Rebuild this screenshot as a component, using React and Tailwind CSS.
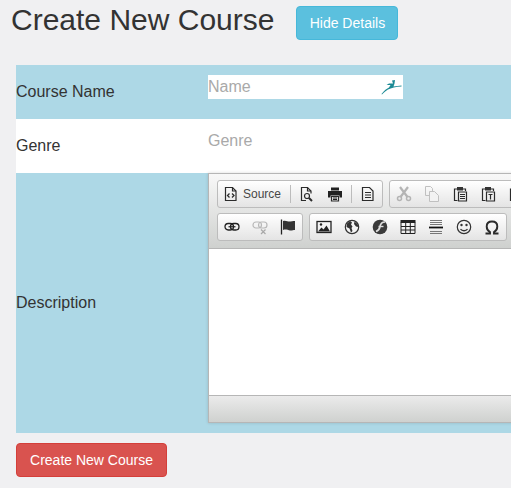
import React from 'react';

const stroke = { fill: 'none', stroke: '#2b2b2b', strokeWidth: 1.2 };

// CKEditor style toolbar icons, 16x16
const icons = {
  source: (
    <>
      <path d="M2.500 1.500h7l3.500 3.500v9.500h-10.500z" {...stroke} />
      <path d="M9.500 1.500v3.500h3.500" {...stroke} />
      <path d="M6.500 7.500l-2 2 2 2M9 7.500l2 2-2 2" {...stroke} strokeWidth="1.300" />
    </>
  ),
  preview: (
    <>
      <path d="M7 14.500h-4.500v-13h6l3.500 3.500v2.500" {...stroke} />
      <path d="M8.500 1.500v3.500h3.500" {...stroke} />
      <circle cx="8" cy="10" r="2.500" {...stroke} />
      <path d="M10 12l3 3" stroke="#2b2b2b" strokeWidth="2" />
    </>
  ),
  print: (
    <>
      <path d="M4 1.500h8v3h-8z" fill="#222" />
      <path d="M1 5h14v6.500h-2.500v-2h-9v2h-2.500z" fill="#222" />
      <path d="M4.500 10.500h7v4.500h-7z" {...stroke} />
      <path d="M6 12h4M6 13.500h4" stroke="#222" />
    </>
  ),
  doc: (
    <>
      <path d="M2.500 1.500h7l3.500 3.500v9.500h-10.500z" {...stroke} />
      <path d="M5 6.500h6M5 9h6M5 11.500h6" stroke="#2b2b2b" />
    </>
  ),
  cut: (
    <>
      <path d="M4 1l7.500 10M12 1l-7.500 10" stroke="#b4b4b4" strokeWidth="2.200" fill="none" />
      <circle cx="3.500" cy="12.500" r="2" fill="none" stroke="#b4b4b4" strokeWidth="1.500" />
      <circle cx="12.500" cy="12.500" r="2" fill="none" stroke="#b4b4b4" strokeWidth="1.500" />
    </>
  ),
  copy: (
    <>
      <path d="M1.500 0.500h5l2 2v7h-7z" fill="none" stroke="#c0c0c0" />
      <path d="M5.500 5.500h5l4 4v6h-9z" fill="#f2f2f2" stroke="#c0c0c0" />
    </>
  ),
  paste: (
    <>
      <path d="M5 3h-2.500v11.500h3" {...stroke} />
      <path d="M11 3h2.500v2" {...stroke} />
      <path d="M5 1h6v3.500h-6z" fill="#333" />
      <path d="M6.500 6h8v9h-8z" {...stroke} />
      <path d="M8 8.500h5M8 10.500h5M8 12.500h5" stroke="#2b2b2b" />
    </>
  ),
  pasteText: (
    <>
      <path d="M5 3h-2.500v11.500h3" {...stroke} />
      <path d="M11 3h2.500v2" {...stroke} />
      <path d="M5 1h6v3.500h-6z" fill="#333" />
      <path d="M6.500 6h8v9h-8z" {...stroke} />
      <path d="M8.500 8.500h4M10.500 8.500v5" stroke="#2b2b2b" strokeWidth="1.200" />
    </>
  ),
  pasteWord: (
    <>
      <path d="M5 3h-2.500v11.500h3" {...stroke} />
      <path d="M5 1h6v3.500h-6z" fill="#333" />
    </>
  ),
  link: (
    <>
      <rect x="1" y="4.500" width="8.500" height="6.500" rx="3.200" fill="none" stroke="#222" strokeWidth="1.300" />
      <rect x="6.500" y="4.500" width="8.500" height="6.500" rx="3.200" fill="none" stroke="#222" strokeWidth="1.300" />
      <path d="M4.500 7.750h7" stroke="#222" strokeWidth="1.200" />
    </>
  ),
  unlink: (
    <>
      <rect x="1" y="3" width="8.500" height="6" rx="3" fill="none" stroke="#b8b8b8" strokeWidth="1.200" />
      <rect x="6.500" y="3" width="8.500" height="6" rx="3" fill="none" stroke="#b8b8b8" strokeWidth="1.200" />
      <path d="M9 10.500l4.500 4.500M13.500 10.500l-4.500 4.500" stroke="#a8a8a8" strokeWidth="1.200" />
    </>
  ),
  anchor: (
    <>
      <path d="M1.500 0.500v15" stroke="#222" strokeWidth="1.300" />
      <path d="M3 2c3-1 5 1 7.500 0.500s3.500-0.500 4.500-0.500v9c-2 0-3 0.800-5 0.500s-4-1.500-7-0.500z" fill="#333" />
    </>
  ),
  image: (
    <>
      <rect x="1" y="2.500" width="14" height="11" fill="none" stroke="#222" strokeWidth="1.300" />
      <path d="M2 12.500l3.500-4 2 2 3-4 3.500 6z" fill="#222" />
      <circle cx="5" cy="5.500" r="1.200" fill="#222" />
    </>
  ),
  globe: (
    <>
      <circle cx="8" cy="8" r="6.700" fill="#f4f4f4" stroke="#333" strokeWidth="1.200" />
      <path d="M3 4.500l3-2.500 2 1.500-1 2 1.500 2-1 1.500 1 3-1.500 1.500-1.500-4-3-1.500zM10.500 2.500l3 2.500 1 3-2.500-0.500-2-2.500z" fill="#333" />
    </>
  ),
  flash: (
    <>
      <circle cx="8" cy="8" r="7.300" fill="#3a3a3a" />
      <path d="M13 3c-3.500 0-4.500 1.500-5 4.500s-1.500 4-4 5" fill="none" stroke="#ddd" strokeWidth="1.700" />
      <path d="M6.500 7.500h5" stroke="#ddd" strokeWidth="1.400" />
    </>
  ),
  table: (
    <>
      <path d="M0.500 1h15v3h-15z" fill="#222" />
      <path d="M1 3.500h14v11h-14zM1 7.500h14M1 11h14M5.700 4v10.500M10.300 4v10.500" fill="none" stroke="#222" />
    </>
  ),
  hr: (
    <>
      <path d="M2 1.500h12M2 3.500h12M2 5.500h12M2 12.500h12M2 14.500h12" stroke="#777" />
      <path d="M1 8.500h14" stroke="#111" strokeWidth="1.800" />
    </>
  ),
  smiley: (
    <>
      <circle cx="8" cy="8" r="6.700" fill="none" stroke="#333" strokeWidth="1.200" />
      <circle cx="5.500" cy="6" r="1.200" fill="#333" />
      <circle cx="10.500" cy="6" r="1.200" fill="#333" />
      <path d="M4.500 10c1.500 2.300 5.500 2.300 7 0" fill="none" stroke="#333" strokeWidth="1.300" />
    </>
  ),
  omega: (
    <path d="M1.500 14.500h4.500v-1.500c-2-1-3.300-3-3.300-5.500 0-3 2-5 5.300-5s5.300 2 5.300 5c0 2.500-1.300 4.500-3.300 5.500v1.500h4.500" fill="none" stroke="#2b2b2b" strokeWidth="1.900" />
  ),
};

function Icon({ name }) {
  return (
    <svg width="16" height="16" viewBox="0 0 16 16" className="shrink-0">
      {icons[name]}
    </svg>
  );
}

function ToolBtn({ name }) {
  return (
    <div className="flex h-[26px] w-[28px] shrink-0 items-center justify-center">
      <Icon name={name} />
    </div>
  );
}

function Group({ children }) {
  return (
    <div className="flex h-[28px] shrink-0 items-center rounded-[3px] border border-[#bcbcbc] bg-gradient-to-b from-[#ffffff] to-[#e4e4e4]">
      {children}
    </div>
  );
}

function Sep() {
  return <div className="mx-[2px] h-[18px] w-px shrink-0 bg-[#bcbcbc]" />;
}

function Editor() {
  return (
    <div className="flex h-[250px] w-[420px] flex-col border border-[#b6b6b6] bg-white shadow-[0_0_3px_rgba(0,0,0,0.15)]">
      {/* Toolbar */}
      <div className="flex h-[75px] shrink-0 flex-col gap-[5px] border-b border-[#b6b6b6] bg-gradient-to-b from-[#f8f8f8] to-[#cfd1cf] pl-[8px] pt-[6px]">
        <div className="flex gap-[6px]">
          <Group>
            <div className="flex h-[26px] w-[70px] shrink-0 items-center pl-[5px]">
              <Icon name="source" />
              <span className="ml-[4px] text-[12px] text-[#474747]">Source</span>
            </div>
            <Sep />
            <ToolBtn name="preview" />
            <ToolBtn name="print" />
            <Sep />
            <ToolBtn name="doc" />
          </Group>
          <Group>
            <ToolBtn name="cut" />
            <ToolBtn name="copy" />
            <ToolBtn name="paste" />
            <ToolBtn name="pasteText" />
            <ToolBtn name="pasteWord" />
          </Group>
        </div>
        <div className="flex gap-[6px]">
          <Group>
            <ToolBtn name="link" />
            <ToolBtn name="unlink" />
            <ToolBtn name="anchor" />
          </Group>
          <Group>
            <ToolBtn name="image" />
            <ToolBtn name="globe" />
            <ToolBtn name="flash" />
            <ToolBtn name="table" />
            <ToolBtn name="hr" />
            <ToolBtn name="smiley" />
            <ToolBtn name="omega" />
          </Group>
        </div>
      </div>
      {/* Content */}
      <div className="flex-1 bg-white" />
      {/* Bottom bar */}
      <div className="h-[27px] shrink-0 border-t border-[#b6b6b6] bg-gradient-to-b from-[#ebebeb] to-[#cfd1cf]" />
    </div>
  );
}

function Row({ label, bg, children, height }) {
  return (
    <div className={`flex ${height} ${bg}`}>
      <div className="flex w-[192px] shrink-0 items-center">
        <label className="text-[16px] text-[#333333]">{label}</label>
      </div>
      <div className="min-w-0 flex-1">{children}</div>
    </div>
  );
}

export default function App() {
  return (
    <div className="h-[488px] w-[511px] overflow-hidden bg-[#f0f0f2] font-['Liberation_Sans',Arial,sans-serif]">
      {/* Header */}
      <div className="flex h-[65px] items-start pl-[11px]">
        <h1 className="mt-[2px] text-[30px] font-normal leading-[36px] text-[#333333]">Create New Course</h1>
        <button className="ml-[22px] mt-[6px] h-[34px] w-[102px] rounded-[4px] border border-[#46b8da] bg-[#5bc0de] text-[14px] text-white">
          Hide Details
        </button>
      </div>

      {/* Form */}
      <div className="ml-[16px]">
        <Row label="Course Name" bg="bg-[#add8e6]" height="h-[54px]">
          <div className="pt-[10px]">
            <div className="flex h-[24px] w-[195px] items-center bg-white">
              <input
                placeholder="Name"
                className="h-full min-w-0 flex-1 bg-transparent text-[16px] text-[#333333] outline-none placeholder:text-[#a9a9a9]"
              />
              {/* password manager badge */}
              <svg width="22" height="16" viewBox="0 0 22 16" className="mr-[1px] shrink-0">
                <path d="M1.500 15C4 11.500 7 9.500 9 8.500L10.500 6 6.500 6 9 4.500 13 4.500 12 1.500 15 1 14.500 4.500 13.500 7.500 21.500 6.500 21.500 7.500C16 7.500 11 9 8 10.500 5.500 12 3.500 14 2 15.500Z" fill="#1b8a94" />
              </svg>
            </div>
          </div>
        </Row>
        <Row label="Genre" bg="bg-white" height="h-[54px]">
          <div className="pt-[10px]">
            <input
              placeholder="Genre"
              className="h-[24px] w-[195px] bg-transparent text-[16px] text-[#333333] outline-none placeholder:text-[#a9a9a9]"
            />
          </div>
        </Row>
        <Row label="Description" bg="bg-[#add8e6]" height="h-[260px]">
          <Editor />
        </Row>
      </div>

      <div className="ml-[16px] mt-[10px]">
        <button className="h-[34px] w-[151px] rounded-[4px] border border-[#d43f3a] bg-[#d9534f] text-[14px] text-white">
          Create New Course
        </button>
      </div>
    </div>
  );
}
